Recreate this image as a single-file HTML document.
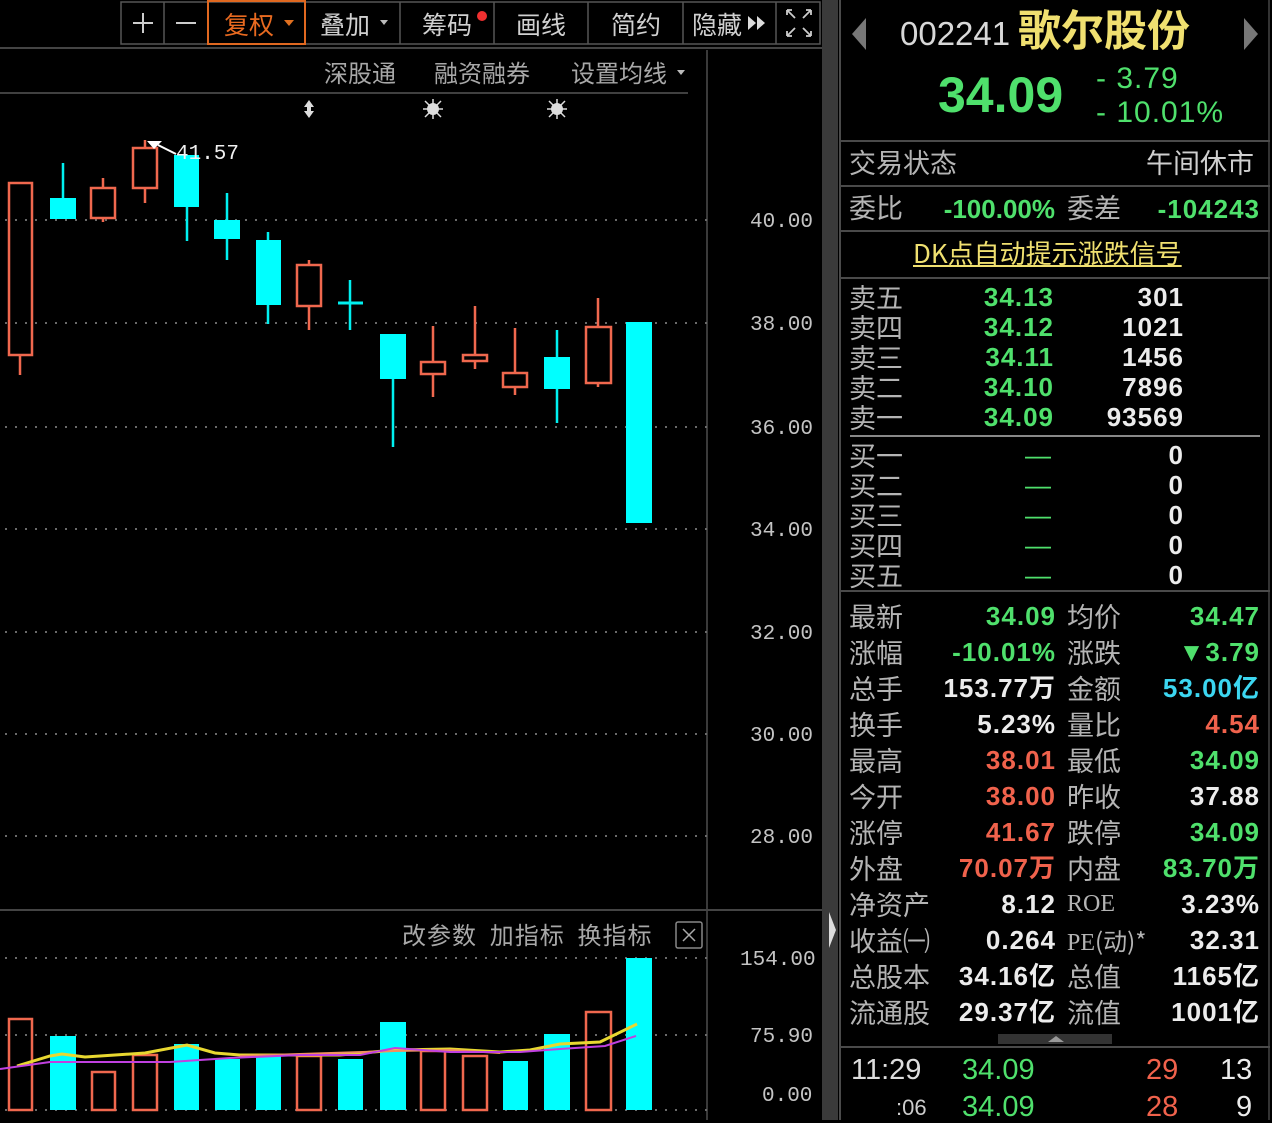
<!DOCTYPE html>
<html><head><meta charset="utf-8"><style>
*{margin:0;padding:0;box-sizing:border-box}
body{width:1272px;height:1120px;background:#000;overflow:hidden;position:relative;font-family:"Liberation Sans","Noto Sans CJK SC",sans-serif}
.a{position:absolute;white-space:nowrap;line-height:1}
.lb{color:#b4b4b4;font-size:27px;font-family:"Noto Sans CJK SC","WenQuanYi Zen Hei",sans-serif}
.n{font-size:26px;font-weight:bold;font-family:"Liberation Sans","Noto Sans CJK SC",sans-serif;text-align:right;letter-spacing:1px}
.col div{height:36px;line-height:36px;white-space:nowrap}
.g{color:#4fe06c}.r{color:#f0624c}.w{color:#ececec}.c{color:#3cd6f0}
.hl{position:absolute;height:2px;background:#4a4a4a}
.tt{position:absolute;top:12px;font-size:25px;color:#d0d0d0;font-family:'Noto Sans CJK SC',sans-serif;line-height:1}
</style></head><body>
<svg width="838" height="1120" style="position:absolute;left:0;top:0">
<rect x="121" y="2" width="699" height="42" fill="none" stroke="#555" stroke-width="1.5"/>
<line x1="0" y1="48" x2="822" y2="48" stroke="#444" stroke-width="2"/>
<line x1="0" y1="93" x2="688" y2="93" stroke="#555" stroke-width="1.5"/>
<line x1="707" y1="50" x2="707" y2="1120" stroke="#3a3a3a" stroke-width="2"/>
<line x1="0" y1="910" x2="822" y2="910" stroke="#444" stroke-width="2"/>
<rect x="822" y="0" width="16" height="1120" fill="#3a3a3a"/>
<polygon points="829,912 836,930 829,948" fill="#ddd"/>
<g stroke="#6a6a6a" stroke-width="2" stroke-dasharray="2,8">
<line x1="5" y1="220" x2="707" y2="220"/><line x1="5" y1="323" x2="707" y2="323"/>
<line x1="5" y1="427" x2="707" y2="427"/><line x1="5" y1="529" x2="707" y2="529"/>
<line x1="5" y1="632" x2="707" y2="632"/><line x1="5" y1="734" x2="707" y2="734"/>
<line x1="5" y1="836" x2="707" y2="836"/>
<line x1="5" y1="958" x2="707" y2="958"/><line x1="5" y1="1035" x2="707" y2="1035"/>
<line x1="5" y1="1110" x2="707" y2="1110"/>
</g>
<g font-family="Liberation Mono,monospace" font-size="21" fill="#c4c4c4">
<text x="750" y="227">40.00</text><text x="750" y="330">38.00</text><text x="750" y="434">36.00</text>
<text x="750" y="536">34.00</text><text x="750" y="639">32.00</text><text x="750" y="741">30.00</text>
<text x="750" y="843">28.00</text>
<text x="740" y="965">154.00</text><text x="750" y="1042">75.90</text><text x="762" y="1101">0.00</text>
</g>
<g stroke="#f0684e" stroke-width="2.5" fill="none">
<line x1="20" y1="355" x2="20" y2="375"/><rect x="9" y="183" width="23" height="172"/>
<line x1="103" y1="178" x2="103" y2="222"/><rect x="91" y="188" width="24" height="30" fill="#000"/>
<line x1="145" y1="140" x2="145" y2="203"/><rect x="133" y="148" width="24" height="40" fill="#000"/>
<line x1="309" y1="260" x2="309" y2="330"/><rect x="297" y="265" width="24" height="41" fill="#000"/>
<line x1="433" y1="326" x2="433" y2="397"/><rect x="421" y="362" width="24" height="12" fill="#000"/>
<line x1="475" y1="306" x2="475" y2="369"/><rect x="463" y="355" width="24" height="6" fill="#000"/>
<line x1="515" y1="328" x2="515" y2="395"/><rect x="503" y="373" width="24" height="14" fill="#000"/>
<line x1="598" y1="298" x2="598" y2="387"/><rect x="586" y="327" width="25" height="56" fill="#000"/>
</g>
<g stroke="#00f0f0" stroke-width="2.5" fill="#00ffff">
<line x1="63" y1="163" x2="63" y2="219"/><rect x="50" y="198" width="26" height="21" stroke="none"/>
<line x1="187" y1="155" x2="187" y2="241"/><rect x="174" y="155" width="25" height="52" stroke="none"/>
<line x1="227" y1="193" x2="227" y2="260"/><rect x="214" y="220" width="26" height="19" stroke="none"/>
<line x1="268" y1="232" x2="268" y2="324"/><rect x="256" y="240" width="25" height="65" stroke="none"/>
<line x1="350" y1="280" x2="350" y2="330"/><line x1="338" y1="303" x2="363" y2="303" stroke-width="3"/>
<line x1="393" y1="334" x2="393" y2="447"/><rect x="380" y="334" width="26" height="45" stroke="none"/>
<line x1="557" y1="330" x2="557" y2="423"/><rect x="544" y="357" width="26" height="32" stroke="none"/>
<rect x="626" y="322" width="26" height="201" stroke="none"/>
</g>
<polygon points="147,141 162,141 154,149" fill="#fff"/>
<line x1="158" y1="145" x2="176" y2="154" stroke="#fff" stroke-width="2"/>
<text x="176" y="159" font-family="Liberation Mono,monospace" font-size="21" fill="#f0f0f0">41.57</text>
<g fill="#ddd"><polygon points="309,100 314,107 311,107 311,111 314,111 309,118 304,111 307,111 307,107 304,107"/>
<circle cx="433" cy="109" r="6"/><circle cx="557" cy="109" r="6"/></g>
<g stroke="#ddd" stroke-width="1.5"><path d="M425 101l16 16M441 101l-16 16M433 99v20M423 109h20M549 101l16 16M565 101l-16 16M557 99v20M547 109h20"/></g>
<g stroke="#f0684e" stroke-width="2.5" fill="none">
<rect x="9" y="1019" width="23" height="91"/><rect x="92" y="1072" width="23" height="38"/>
<rect x="133" y="1055" width="24" height="55"/><rect x="297" y="1056" width="24" height="54"/>
<rect x="421" y="1051" width="24" height="59"/><rect x="463" y="1056" width="24" height="54"/>
<rect x="586" y="1012" width="25" height="98"/>
</g>
<g fill="#00ffff">
<rect x="50" y="1036" width="26" height="74"/><rect x="174" y="1044" width="25" height="66"/>
<rect x="215" y="1059" width="25" height="51"/><rect x="256" y="1054" width="25" height="56"/>
<rect x="338" y="1059" width="25" height="51"/><rect x="380" y="1022" width="26" height="88"/>
<rect x="503" y="1061" width="25" height="49"/><rect x="544" y="1034" width="26" height="76"/>
<rect x="626" y="958" width="26" height="152"/>
</g>
<polyline fill="none" stroke="#e8d830" stroke-width="3" points="17,1066 50,1056 62,1054 85,1057 115,1055 145,1053 187,1045 215,1053 240,1055 270,1055 340,1055 395,1050 450,1049 500,1052 530,1050 560,1044 600,1042 637,1024"/>
<polyline fill="none" stroke="#f09060" stroke-width="2" points="240,1056 300,1054 395,1051 450,1050 500,1053"/>
<polyline fill="none" stroke="#c040e0" stroke-width="2" points="0,1069 50,1062 170,1062 230,1058 300,1055 360,1055 395,1048 450,1052 520,1052 560,1049 605,1046 636,1036"/>
<rect x="676" y="922" width="26" height="26" fill="none" stroke="#888" stroke-width="1.5" rx="2"/>
<path d="M683 929l12 12M695 929l-12 12" stroke="#aaa" stroke-width="1.5"/>
<g stroke="#555" stroke-width="1.5"><line x1="164" y1="2" x2="164" y2="44"/><line x1="400" y1="2" x2="400" y2="44"/><line x1="494" y1="2" x2="494" y2="44"/><line x1="588" y1="2" x2="588" y2="44"/><line x1="683" y1="2" x2="683" y2="44"/><line x1="776" y1="2" x2="776" y2="44"/></g>
<rect x="208" y="1" width="97" height="43" fill="none" stroke="#e06820" stroke-width="2"/>
<path d="M133 23h20M143 13v20M176 23h20" stroke="#ccc" stroke-width="2"/>
<polygon points="284,20 294,20 289,26" fill="#e07020"/>
<polygon points="380,20 388,20 384,25" fill="#bbb"/>
<circle cx="482" cy="16" r="5" fill="#f03030"/>
<polygon points="748,16 748,30 756,23" fill="#ddd"/><polygon points="757,16 757,30 765,23" fill="#ddd"/>
<path d="M787 10l8 8M787 10v5M787 10h5M811 10l-8 8M811 10v5M811 10h-5M787 36l8-8M787 36v-5M787 36h5M811 36l-8-8M811 36v-5M811 36h-5" stroke="#ccc" stroke-width="1.8" fill="none"/>
<polygon points="677,70 685,70 681,75" fill="#bbb"/>
</svg>
<div class="tt" style="left:224px;color:#e86a20">复权</div>
<div class="tt" style="left:320px">叠加</div>
<div class="tt" style="left:422px">筹码</div>
<div class="tt" style="left:516px">画线</div>
<div class="tt" style="left:611px">简约</div>
<div class="tt" style="left:692px">隐藏</div>
<div class="a" style="left:324px;top:60px;font-size:24px;color:#a8a8a8;font-family:'Noto Sans CJK SC',sans-serif">深股通</div>
<div class="a" style="left:434px;top:60px;font-size:24px;color:#a8a8a8;font-family:'Noto Sans CJK SC',sans-serif">融资融券</div>
<div class="a" style="left:571px;top:60px;font-size:24px;color:#a8a8a8;font-family:'Noto Sans CJK SC',sans-serif">设置均线</div>
<div class="a" style="left:402px;top:922px;font-size:24px;color:#a8a8a8;font-family:'Noto Sans CJK SC',sans-serif;letter-spacing:1px">改参数&nbsp;&nbsp;加指标&nbsp;&nbsp;换指标</div>

<div style="position:absolute;left:839px;top:0;width:2px;height:1120px;background:#4a4a4a"></div>
<div style="position:absolute;left:1268px;top:0;width:2px;height:1120px;background:#333"></div>
<svg width="436" height="60" style="position:absolute;left:836px;top:0">
<polygon points="16,34 30,18 30,50" fill="#777"/><polygon points="422,34 408,18 408,50" fill="#777"/>
</svg>
<div class="a" style="left:900px;top:17px;font-size:33px;color:#d8d8d8">002241</div>
<div class="a" style="left:1018px;top:7px;font-size:43px;font-weight:bold;color:#f0e070;font-family:'Noto Sans CJK SC',sans-serif">歌尔股份</div>
<div class="a g" style="left:938px;top:70px;font-size:50px;font-weight:bold">34.09</div>
<div class="a g" style="left:1096px;top:64px;font-size:30px;letter-spacing:1px">- 3.79</div>
<div class="a g" style="left:1096px;top:98px;font-size:30px;letter-spacing:1px">- 10.01%</div>
<div class="hl" style="left:840px;top:140px;width:430px"></div>
<div class="a lb" style="left:849px;top:148px">交易状态</div>
<div class="a" style="left:1146px;top:148px;font-size:27px;color:#cfcfcf;font-family:'Noto Sans CJK SC',sans-serif">午间休市</div>
<div class="hl" style="left:840px;top:185px;width:430px"></div>
<div class="a lb" style="left:849px;top:193px">委比</div>
<div class="a n g" style="left:920px;width:135px;top:196px;letter-spacing:0">-100.00%</div>
<div class="a lb" style="left:1067px;top:193px">委差</div>
<div class="a n g" style="left:1120px;width:140px;top:196px">-104243</div>
<div class="hl" style="left:840px;top:230px;width:430px"></div>
<div class="a" style="left:913px;top:240px;font-size:26px;color:#f0e070;text-decoration:underline;font-family:'Noto Sans CJK SC',sans-serif">DK点自动提示涨跌信号</div>
<div class="hl" style="left:840px;top:277px;width:430px"></div>
<div class="hl" style="left:850px;top:435px;width:410px;background:#888"></div>
<div class="hl" style="left:840px;top:590px;width:430px"></div>
<div class="hl" style="left:840px;top:1046px;width:430px"></div>
<div style="position:absolute;left:998px;top:1034px;width:114px;height:10px;background:#333"></div>
<svg width="20" height="8" style="position:absolute;left:1046px;top:1035px"><polygon points="2,7 10,1 18,7" fill="#999"/></svg>

<div class="a lb" style="left:849px;top:282px;line-height:30px;white-space:normal;width:60px">卖五<br>卖四<br>卖三<br>卖二<br>卖一</div>
<div class="a n g" style="left:940px;width:114px;top:282px;line-height:30px;white-space:normal">34.13<br>34.12<br>34.11<br>34.10<br>34.09</div>
<div class="a n w" style="left:1080px;width:104px;top:282px;line-height:30px;white-space:normal">301<br>1021<br>1456<br>7896<br>93569</div>
<div class="a lb" style="left:849px;top:440px;line-height:30px;white-space:normal;width:60px">买一<br>买二<br>买三<br>买四<br>买五</div>
<div class="a n g" style="left:1020px;width:32px;top:440px;line-height:30px;white-space:normal;font-weight:normal">—<br>—<br>—<br>—<br>—</div>
<div class="a n w" style="left:1120px;width:64px;top:440px;line-height:30px;white-space:normal">0<br>0<br>0<br>0<br>0</div>

<div class="a lb col" style="left:849px;top:598px;width:100px"><div>最新</div><div>涨幅</div><div>总手</div><div>换手</div><div>最高</div><div>今开</div><div>涨停</div><div>外盘</div><div>净资产</div><div>收益㈠</div><div>总股本</div><div>流通股</div></div>
<div class="a n col" style="left:890px;width:166px;top:598px">
<div class="g">34.09</div><div class="g">-10.01%</div><div class="w">153.77万</div><div class="w">5.23%</div><div class="r">38.01</div><div class="r">38.00</div><div class="r">41.67</div><div class="r">70.07万</div><div class="w">8.12</div><div class="w">0.264</div><div class="w">34.16亿</div><div class="w">29.37亿</div></div>
<div class="a lb col" style="left:1067px;top:598px;width:110px"><div>均价</div><div>涨跌</div><div>金额</div><div>量比</div><div>最低</div><div>昨收</div><div>跌停</div><div>内盘</div><div style="font-family:'Liberation Serif',serif;font-size:24px">ROE</div><div style="font-size:24px"><span style="font-family:'Liberation Serif',serif">PE</span>(动)*</div><div>总值</div><div>流值</div></div>
<div class="a n col" style="left:1110px;width:150px;top:598px">
<div class="g">34.47</div><div class="g">▼3.79</div><div class="c">53.00亿</div><div class="r">4.54</div><div class="g">34.09</div><div class="w">37.88</div><div class="g">34.09</div><div class="g">83.70万</div><div class="w">3.23%</div><div class="w">32.31</div><div class="w">1165亿</div><div class="w">1001亿</div></div>

<div class="a" style="left:851px;top:1056px;font-size:29px;color:#ddd">11:29</div>
<div class="a g" style="left:962px;top:1056px;font-size:29px">34.09</div>
<div class="a r" style="left:1146px;top:1056px;font-size:29px">29</div>
<div class="a w" style="left:1220px;top:1056px;font-size:29px">13</div>
<div class="a" style="left:896px;top:1097px;font-size:22px;color:#ccc">:06</div>
<div class="a g" style="left:962px;top:1093px;font-size:29px">34.09</div>
<div class="a r" style="left:1146px;top:1093px;font-size:29px">28</div>
<div class="a w" style="left:1236px;top:1093px;font-size:29px">9</div>
</body></html>
